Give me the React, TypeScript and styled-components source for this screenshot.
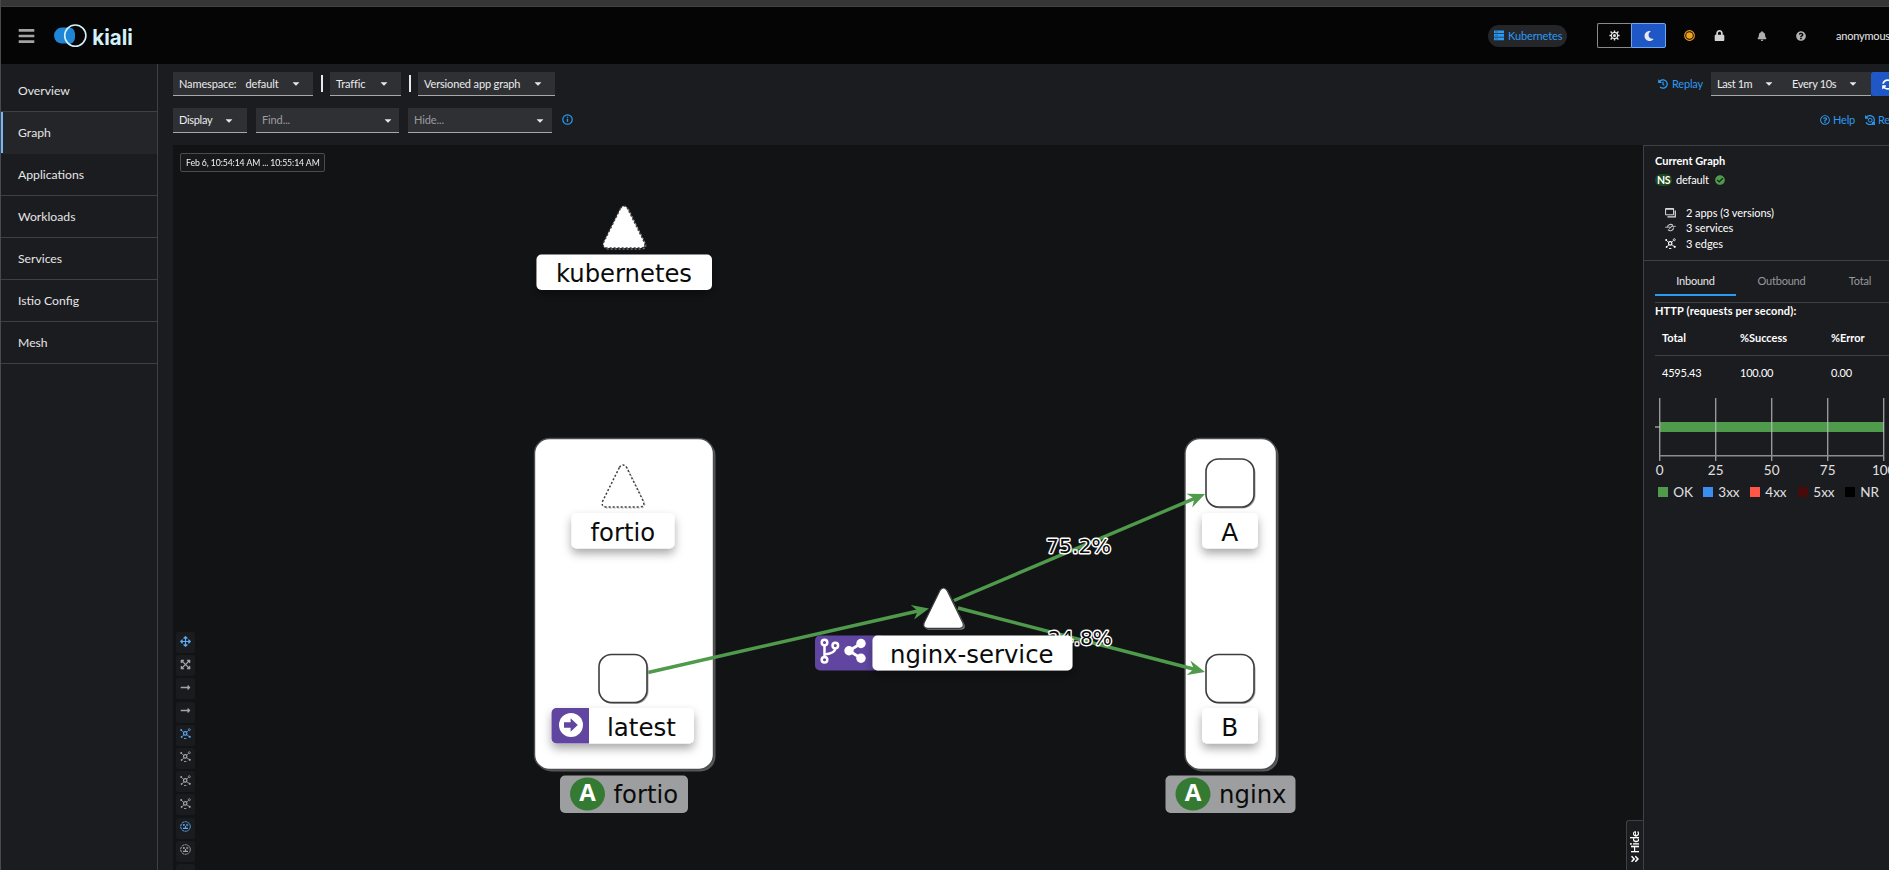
import React from 'react';
import styled, { createGlobalStyle, css } from 'styled-components';
import {
  FaArrowsAlt, FaBars, FaBell, FaCaretDown, FaCheckCircle, FaExpandArrowsAlt, FaHistory, FaLock,
  FaLongArrowAltRight, FaMoon, FaQuestionCircle, FaRegQuestionCircle, FaSyncAlt, FaAngleDoubleRight,
} from 'react-icons/fa';

const line = '#3f4044';
const blue = '#2b9af3';

const GlobalStyle = createGlobalStyle`
  * { box-sizing: border-box; }
  body {
    margin: 0; overflow: hidden; background: #1b1c20; color: #e6e6e6;
    font-family: Lato, "Open Sans", sans-serif; font-size: 11px; line-height: 16px;
    white-space: nowrap;
  }
`;

const Page = styled.div`
  display: flex; flex-direction: column;
  width: 1889px; height: 870px; overflow: hidden;
  background: #1b1c20; border-left: 1px solid #48494b;
`;
const WindowEdge = styled.div`
  flex: none; height: 7px; background: #363636; border-bottom: 1px solid #434343;
`;
const Masthead = styled.header`
  flex: none; display: flex; align-items: center; height: 57px; padding-left: 17px; background: #050505;
`;
const MenuIcon = styled(FaBars)`width: 17px; height: 18px; color: #a3a3a3; margin-right: 18px;`;
const Tools = styled.div`
  display: flex; align-items: center; margin-left: auto; width: 401px; flex: none; font-size: 11px;
`;
const ClusterPill = styled.div`
  display: flex; align-items: center; gap: 4px; width: 79px; height: 22px; padding-left: 6px;
  border-radius: 11px; background: #25262a; color: ${blue}; margin-right: 30px; letter-spacing: -0.12px;
  flex: none;
`;
const ThemeToggle = styled.div`display: flex; flex: none; height: 25px; margin-right: 18px;`;
const ThemeSide = styled.div<{ $on?: boolean }>`
  display: flex; align-items: center; justify-content: center; width: ${p => (p.$on ? 35 : 34)}px;
  border: 1px solid ${p => (p.$on ? '#6aa9ee' : '#8a8a8a')};
  border-right-width: ${p => (p.$on ? 1 : 0)}px;
  border-radius: ${p => (p.$on ? '0 2px 2px 0' : '2px 0 0 2px')};
  background: ${p => (p.$on ? '#1f57c6' : 'transparent')};
`;
const HeadIcon = styled.span<{ $w: number; $gap: number; $c: string }>`
  display: flex; flex: none; width: ${p => p.$w}px; margin-right: ${p => p.$gap}px; color: ${p => p.$c};
  svg { width: 100%; height: auto; }
`;
const User = styled.span`letter-spacing: -0.2px;`;

const Body = styled.div`display: flex; flex: 1; min-height: 0;`;
const Sidebar = styled.nav`flex: none; width: 157px; border-right: 1px solid ${line}; padding-top: 6px;`;
const NavItem = styled.a<{ $active?: boolean }>`
  display: flex; align-items: center; height: 42px; padding: 1px 0 0 17px;
  border-bottom: 1px solid ${line}; font-size: 12.2px;
  ${p => p.$active && css`
    background: #242529; box-shadow: inset 2px 0 #73b7f7; border-bottom-color: #242529;
  `}
`;
const Main = styled.main`flex: 1; min-width: 0; display: flex; flex-direction: column; padding-left: 15px;`;
const ToolRow = styled.div<{ $h: number; $pt: number }>`
  flex: none; display: flex; align-items: flex-start; height: ${p => p.$h}px; padding-top: ${p => p.$pt}px;
`;
const Select = styled.div<{ $w: number; $h?: number; $left?: number; $caret?: number; $muted?: boolean; $ls?: number }>`
  display: flex; align-items: center; flex: none; width: ${p => p.$w}px; height: ${p => p.$h ?? 24}px;
  padding: 0 ${p => p.$caret ?? 13}px 0 ${p => p.$left ?? 6}px; background: #2f3034; border-bottom: 1px solid #a8a8a8;
  color: ${p => (p.$muted ? '#9b9c9e' : '#ececec')}; letter-spacing: ${p => p.$ls ?? -0.12}px;
  svg { margin-left: auto; color: #e6e6e6; width: 8px; height: 11px; flex: none; }
`;
const Value = styled.span`margin-left: 9px;`;
const Bar = styled.i`width: 2px; height: 17px; margin: 3px 7px 0 8px; background: #e8e8e8; flex: none;`;
const Gap = styled.i<{ $w: number }>`width: ${p => p.$w}px; flex: none;`;
const InfoMark = styled.span`display: flex; color: ${blue}; margin: 6px 0 0 10px;`;
const RightTools = styled.div<{ $w: number }>`
  display: flex; align-items: flex-start; flex: none; margin-left: auto; width: ${p => p.$w}px;
`;
const LinkAction = styled.a<{ $w: number; $h: number; $gap: number }>`
  display: flex; align-items: center; gap: ${p => p.$gap}px; width: ${p => p.$w}px; height: ${p => p.$h}px;
  flex: none; color: ${blue}; letter-spacing: -0.2px;
  svg { width: 10px; height: 10px; flex: none; }
`;
const Refresh = styled.button`
  display: flex; align-items: center; flex: none; width: 34px; height: 24px; padding: 0 0 0 11px;
  border: 0; border-radius: 2px; background: #1f57c6; color: #fff;
`;

const Content = styled.div`display: flex; flex: 1; min-height: 0;`;
const Canvas = styled.section`position: relative; flex: none; width: 1470px; background: #121315;`;
const TimeRange = styled.div`
  position: absolute; left: 7px; top: 8px; width: 145px; height: 19px; padding-left: 5px;
  border: 1px solid #4a4b4f; border-radius: 2px; background: #17181a; color: #f2f2f2;
  font-size: 10px; line-height: 16px;
`;
const TimeText = styled.span`
  display: inline-block; transform: scaleX(0.87); transform-origin: 0 50%; letter-spacing: -0.12px;
`;
const GraphLayer = styled.svg`position: absolute; left: 0; top: 0; font-family: "DejaVu Sans", sans-serif;`;
const ToolStack = styled.div`
  position: absolute; left: 3px; top: 487px; display: flex; flex-direction: column; gap: 2.2px;
`;
const StackButton = styled.div<{ $on?: boolean }>`
  display: flex; align-items: center; justify-content: center; width: 19px; height: 21px; padding-bottom: 3px;
  border-radius: 2px; background: #1a1b1e; color: ${p => (p.$on ? '#5fa8ee' : '#a3a4a6')};
`;
const HideTab = styled.div`
  position: absolute; right: 0; bottom: 0; width: 17px; height: 50px; display: flex; flex-direction: column;
  align-items: center; gap: 1px; padding-top: 10px;
  border: 1px solid ${line}; border-width: 1px 0 0 1px; border-radius: 3px 0 0 0; background: #1b1c20; color: #fff;
  font-weight: 700;
`;
const HideText = styled.span`
  writing-mode: vertical-rl; transform: rotate(180deg); letter-spacing: -0.25px; line-height: 14px;
`;

const Panel = styled.aside`
  flex: 1; min-width: 0; border-left: 1px solid ${line}; border-top: 1px solid ${line}; color: #fff;
`;
const Summary = styled.div`height: 115px; padding: 7px 0 0 11px; border-bottom: 1px solid ${line};`;
const Strong = styled.div`font-weight: 700;`;
const NsRow = styled.div`display: flex; align-items: center; height: 16px; margin-top: 3px; letter-spacing: -0.15px;`;
const NsBadge = styled.span`
  width: 17px; height: 12px; margin-right: 4px; border-radius: 6px; background: #1c4a1f; color: #fff;
  font-size: 10.5px; line-height: 12px; font-weight: 700; text-align: center; letter-spacing: -0.3px;
`;
const Check = styled(FaCheckCircle)`width: 10px; height: 10px; margin-left: 6px; color: #4f9a4b;`;
const Facts = styled.div`display: grid; grid-auto-rows: 15.5px; margin: 17px 0 0 10px;`;
const Fact = styled.div`display: flex; align-items: center; gap: 10px; letter-spacing: -0.06px;`;
const Details = styled.div<{ $h: number }>`padding-left: 11px; height: ${p => p.$h}px;`;
const Tabs = styled.div`display: flex; height: 42px; padding-top: 3px; border-bottom: 1px solid ${line};`;
const Tab = styled.div<{ $on?: boolean; $w: number }>`
  display: flex; align-items: center; justify-content: center; flex: none; width: ${p => p.$w}px; height: 32px;
  padding-top: 4px;
  border-bottom: 2px solid ${p => (p.$on ? blue : 'transparent')}; color: ${p => (p.$on ? '#e8e8e8' : '#97989a')};
  letter-spacing: -0.2px;
`;
const Heading = styled.div`font-weight: 700; letter-spacing: 0.14px;`;
const Row = styled.div<{ $head?: boolean; $h: number; $ls: number }>`
  display: grid; grid-template-columns: 78px 91px 1fr; align-items: center; padding-left: 7px;
  height: ${p => p.$h}px; font-weight: ${p => (p.$head ? 700 : 400)}; letter-spacing: ${p => p.$ls}px;
  border-bottom: ${p => (p.$head ? `1px solid ${line}` : 'none')}; padding-top: ${p => (p.$head ? 2 : 0)}px;
`;
const Chart = styled.svg`display: block; font-family: Lato, sans-serif;`;

const Ring = () => (
  <svg width="11" height="11" viewBox="0 0 11 11">
    <circle cx="5.5" cy="5.5" r="4.7" fill="none" stroke="currentColor" strokeWidth="1.2" />
    <path d="M5.5 4.8v3M5.5 2.8v1" stroke="currentColor" strokeWidth="1.4" />
  </svg>
);
const Topology = () => (
  <svg width="11" height="11" viewBox="0 0 11 11" fill="none" stroke="currentColor">
    <circle cx="5.2" cy="5.4" r="1.7" strokeWidth="1.2" />
    <path d="M1.2 2.2 3.6 4.4M6.6 4.2 8.4 2.6M4 6.8 2 8.6M6.7 6.7l2.6 1.8" strokeWidth=".8" />
    <g fill="currentColor" stroke="none">
      <circle cx="1.2" cy="2" r="1" /><circle cx="9.7" cy="8.8" r="1.1" /><circle cx="1.6" cy="9" r=".9" />
      <path d="M4 10h2.4v.9H4z" />
    </g>
    <circle cx="9.3" cy="1.7" r="1" strokeWidth=".8" />
  </svg>
);
const Boxed = () => (
  <svg width="11" height="11" viewBox="0 0 11 11" fill="none" stroke="currentColor">
    <circle cx="5.5" cy="5.5" r="4.8" strokeWidth="1" strokeDasharray="2.4 .6" />
    <circle cx="3.9" cy="4.1" r="1" fill="currentColor" stroke="none" /><circle cx="7.2" cy="4" r=".8" strokeWidth=".8" />
    <path d="M3 7.4h5M5.5 5v2" strokeWidth="1.1" />
  </svg>
);
const Cluster = () => (
  <svg width="10" height="11" viewBox="0 0 10 11" fill="currentColor">
    <path d="M0 .6h10v2.7H0zM0 4.1h10v2.7H0zM0 7.6h10v2.7H0z" />
    <path d="M1 1.9h3M1 5.4h3M1 8.9h3" stroke="#1d4c78" strokeWidth=".6" />
  </svg>
);
const Sun = () => (
  <svg width="11" height="11" viewBox="0 0 11 11" fill="none" stroke="#e4e4e4">
    <circle cx="5.5" cy="5.5" r="3.1" strokeWidth="1.2" /><circle cx="5.5" cy="5.5" r="1.5" fill="#e4e4e4" stroke="none" />
    <path d="M5.5 .4v2M5.5 8.6v2M.4 5.5h2M8.6 5.5h2M1.6 1.6 3.2 3.2M7.8 7.8l1.6 1.6M9.4 1.6 7.8 3.2M3.2 7.8 1.6 9.4" strokeWidth="1.4" />
  </svg>
);
const Status = () => (
  <svg viewBox="0 0 10 10">
    <circle cx="5" cy="5" r="4.4" fill="none" stroke="#f0a020" strokeWidth="1" />
    <circle cx="5" cy="5" r="3" fill="#f0a020" />
  </svg>
);
const Apps = () => (
  <svg width="11" height="10" viewBox="0 0 11 10" fill="none" stroke="#e0e0e0">
    <path d="M.6 .6h8v6.2h-8z" /><path d="M.6 1h8" strokeWidth="1.4" /><path d="M10.3 2.6v6.3H2.4" strokeWidth="1.2" />
  </svg>
);
const Services = () => (
  <svg width="11" height="10" viewBox="0 0 11 10" fill="none" stroke="#c8c8c8">
    <path d="M2.4 4A3.2 3.2 0 0 1 8 2.6M8.6 4.6A3.2 3.2 0 0 1 3 6.6" strokeWidth="1.1" />
    <path d="M.2 4.2h5.4l1.6-1.6M10.8 3.4H7L3.8 6.2" strokeWidth=".9" />
  </svg>
);
const Reset = () => (
  <svg viewBox="0 0 10 10" fill="none" stroke="currentColor">
    <path d="M1.2 2.4A4.5 4.5 0 1 1 1 7.4M.6 .5v2.6h2.6" strokeWidth="1.2" />
    <circle cx="5.2" cy="5.2" r="1.9" strokeWidth="1" /><path d="M6.5 6.5 10 9.6M9.6 6.8v2.8H7" strokeWidth="1" />
  </svg>
);

const Logo = () => (
  <svg width="82" height="30" viewBox="53 21 82 30">
    <rect x="54" y="27.6" width="21" height="16" rx="8" fill="#1f86d6" />
    <path d="M68 28v15.4q4.5 1 6-2.4 2-5 0-10.8-1.7-3.2-6-2.2z" fill="#1f86d6" />
    <circle cx="75.3" cy="35.6" r="10.6" fill="none" stroke="#d3f1fb" strokeWidth="1.6" />
    <text x="92.3" y="45" fontFamily="Inter, sans-serif" fontWeight="700" fontSize="21.5" textLength="40.5" lengthAdjust="spacingAndGlyphs" fill="#d3f1fb">kiali</text>
  </svg>
);

const TRI = 'M-3.6 2.4Q0-2.5 3.6 2.4L20.5 36.5Q22 41.5 17 42H-17Q-22 41.5-20.5 36.5Z';
const Triangle = ({ x, y, dotted }: { x: number; y: number; dotted?: boolean }) => (
  <g transform={`translate(${x} ${y})`}>
    {!dotted && <path d={TRI} transform="translate(1.5 1.5) scale(.95 .96)" fill="#77787a" />}
    {dotted && <path d={TRI} transform="translate(1 1)" fill="none" stroke="#aaa" strokeWidth="1" strokeDasharray="2 2" />}
    <path d={TRI} transform={dotted ? undefined : 'scale(.95 .96)'} fill="#fff" stroke="#3c3d40" strokeWidth={dotted ? 1.5 : 1.2} strokeDasharray={dotted ? '2 2' : undefined} />
  </g>
);
const Square = ({ x, y }: { x: number; y: number }) => (
  <g>
    <rect x={x + 1.5} y={y + 1.5} width="48" height="48" rx="13" fill="#a8a8a8" />
    <rect x={x} y={y} width="48" height="48" rx="12.5" fill="#fff" stroke="#3c3d40" strokeWidth="1.6" />
  </g>
);
const Group = ({ x, w }: { x: number; w: number }) => (
  <g>
    <rect x={x + 2} y="440.5" width={w} height="331" rx="15" fill="#58595b" />
    <rect x={x} y="438.5" width={w} height="331" rx="15" fill="#fff" stroke="#4b4c4e" strokeWidth="1.4" />
  </g>
);
type NameProps = { x: number; y: number; w: number; tx: number; tw: number; h?: number; children: string };
const Name = ({ x, y, w, tx, tw, h = 35.5, children }: NameProps) => (
  <g>
    <rect x={x} y={y} width={w} height={h} rx="5" fill="#fff" filter="url(#lift)" />
    <text x={tx} y={y + 27.6} fontSize="24" textLength={tw} lengthAdjust="spacingAndGlyphs" fill="#0b0b0b">{children}</text>
  </g>
);
const GroupName = ({ x, w, tx, tw, children }: { x: number; w: number; tx: number; tw: number; children: string }) => (
  <g>
    <rect x={x} y="775.5" width={w} height="37.5" rx="5" fill="#9d9ea0" />
    <ellipse cx={x + 27.5} cy="794" rx="17.5" ry="16.5" fill="#347a32" />
    <text x={x + 27.5} y="800.6" textAnchor="middle" fontFamily="Open Sans, sans-serif" fontSize="24" fontWeight="700" fill="#fff">A</text>
    <text x={tx} y="802.6" fontSize="24" textLength={tw} lengthAdjust="spacingAndGlyphs" fill="#0b0b0b">{children}</text>
  </g>
);
const Edge = ({ x1, y1, x2, y2 }: { x1: number; y1: number; x2: number; y2: number }) => {
  const angle = (Math.atan2(y2 - y1, x2 - x1) * 180) / Math.PI;
  const length = Math.hypot(x2 - x1, y2 - y1);
  return (
    <g transform={`translate(${x1} ${y1}) rotate(${angle})`} fill="#4f9a4b">
      <path d={`M0 0H${length - 8}`} stroke="#4f9a4b" strokeWidth="3.4" />
      <path d={`M${length} 0L${length - 17} -7.4L${length - 11.5} 0L${length - 17} 7.4Z`} />
    </g>
  );
};
const Percent = ({ x, y, w, children }: { x: number; y: number; w: number; children: string }) => (
  <text x={x} y={y} fontSize="20" textLength={w} lengthAdjust="spacingAndGlyphs" fill="#0b0b0b" stroke="#fff" strokeWidth="2.8" strokeLinejoin="round" paintOrder="stroke">{children}</text>
);

const Graph = () => (
  <GraphLayer width="1470" height="725" viewBox="173 145 1470 725">
    <defs>
      <filter id="lift" x="-20%" y="-40%" width="140%" height="220%">
        <feDropShadow dx="0" dy="5" stdDeviation="5" floodColor="#000" floodOpacity=".34" />
      </filter>
    </defs>
    <Group x={534.5} w={179} />
    <Group x={1185} w={91.5} />
    <Edge x1={648} y1={672.5} x2={929} y2={608.5} />
    <Edge x1={954} y1={600.5} x2={1205} y2={494} />
    <Edge x1={958} y1={608} x2={1205} y2={672} />
    <Percent x={1046} y={553.3} w={65}>75.2%</Percent>
    <Percent x={1048} y={645.3} w={64}>24.8%</Percent>
    <Triangle x={624} y={206} dotted />
    <Name x={536.5} y={254.5} w={175.5} tx={556} tw={136}>kubernetes</Name>
    <Triangle x={623} y={465} dotted />
    <Name x={571.5} y={513} w={103} tx={590.5} tw={64.5}>fortio</Name>
    <Square x={599} y={654.5} />
    <Name x={551.5} y={708} w={142.5} tx={607} tw={69}>latest</Name>
    <path d="M556.5 708H589v35.5H556.5a5 5 0 0 1-5-5V713a5 5 0 0 1 5-5z" fill="#6046a0" />
    <circle cx="571" cy="725" r="12" fill="#fff" />
    <path d="M564 722.3h6.6v-4l7.2 6.7-7.2 6.7v-4H564z" fill="#6046a0" />
    <Square x={1206} y={459} />
    <Name x={1202} y={513} w={56} tx={1221.3} tw={17}>A</Name>
    <Square x={1206} y={654.5} />
    <Name x={1202} y={708} w={56} tx={1221.3} tw={17}>B</Name>
    <Triangle x={943.5} y={588} />
    <rect x="815" y="635.5" width="70" height="35" rx="5" fill="#6046a0" />
    <Name x={872.5} y={635.5} w={200} h={35} tx={890} tw={163.5}>nginx-service</Name>
    <g fill="none" stroke="#fff" strokeWidth="2.5">
      <circle cx="824.5" cy="642.5" r="2.8" /><circle cx="824.5" cy="659.8" r="2.8" /><circle cx="835.3" cy="645.6" r="2.8" />
      <path d="M824.5 645.5v11.5M835.3 648.5q0 4.5-10.8 6" />
    </g>
    <g fill="#fff">
      <circle cx="849" cy="650.8" r="4.7" /><circle cx="861" cy="643.5" r="4.7" /><circle cx="861" cy="658.2" r="4.7" />
      <path d="M861 643.5 849 650.8 861 658.2" fill="none" stroke="#fff" strokeWidth="2.8" />
    </g>
    <GroupName x={560} w={128} tx={613.5} tw={64.5}>fortio</GroupName>
    <GroupName x={1165.5} w={130} tx={1219} tw={67.5}>nginx</GroupName>
  </GraphLayer>
);

const legend: [number, string, string][] = [
  [3, '#4f9a4b', 'OK'], [48, '#3a8fee', '3xx'], [95, '#ff5647', '4xx'], [143, '#470b0b', '5xx'], [190, '#000', 'NR'],
];
const HttpChart = () => (
  <Chart width="234" height="110" viewBox="0 0 234 110">
    <path d="M-1 30H5" stroke="#77787a" strokeWidth="2" />
    <rect x="5" y="25" width="224" height="10" fill="#4f9a4b" />
    {[0, 25, 50, 75, 100].map((v, i) => (
      <g key={v}>
        <path d={`M${4.7 + i * 56} 1V64`} stroke="#c2c2c2" strokeOpacity=".8" strokeWidth="1.3" />
        <text x={4.7 + i * 56} y="78" fontSize="13.5" fill="#e0e0e0" textAnchor="middle">{v}</text>
      </g>
    ))}
    <path d="M4.5 58.7H229" stroke="#8b8c8e" strokeWidth="1.5" />
    {legend.map(([x, c, t]) => (
      <g key={t}>
        <rect x={x} y="90" width="10" height="10" fill={c} />
        <text x={x + 15.3} y="100" fontSize="13.5" fill="#e0e0e0">{t}</text>
      </g>
    ))}
  </Chart>
);

const nav = ['Overview', 'Graph', 'Applications', 'Workloads', 'Services', 'Istio Config', 'Mesh'];
const stack: [React.ReactNode, boolean][] = [
  [<FaArrowsAlt size={11} />, true], [<FaExpandArrowsAlt size={11} />, false],
  [<FaLongArrowAltRight size={11} />, false], [<FaLongArrowAltRight size={11} />, false],
  [<Topology />, true], [<Topology />, false], [<Topology />, false], [<Topology />, false],
  [<Boxed />, true], [<Boxed />, false], [null, false],
];

export default function App() {
  return (
    <Page>
      <GlobalStyle />
      <WindowEdge />
      <Masthead>
        <MenuIcon />
        <Logo />
        <Tools>
          <ClusterPill><Cluster />Kubernetes</ClusterPill>
          <ThemeToggle>
            <ThemeSide><Sun /></ThemeSide>
            <ThemeSide $on><FaMoon size={10} color="#e8e8e8" /></ThemeSide>
          </ThemeToggle>
          <HeadIcon $w={11} $gap={19} $c="#f0a020"><Status /></HeadIcon>
          <HeadIcon $w={11} $gap={32} $c="#d2d2d2"><FaLock /></HeadIcon>
          <HeadIcon $w={10} $gap={29} $c="#b0b0b0"><FaBell /></HeadIcon>
          <HeadIcon $w={10} $gap={30} $c="#b0b0b0"><FaQuestionCircle /></HeadIcon>
          <User>anonymous</User>
        </Tools>
      </Masthead>
      <Body>
        <Sidebar>
          {nav.map(n => <NavItem key={n} $active={n === 'Graph'}>{n}</NavItem>)}
        </Sidebar>
        <Main>
          <ToolRow $h={44} $pt={8}>
            <Select $w={140}>Namespace:<Value>default</Value><FaCaretDown /></Select>
            <Bar />
            <Select $w={71}>Traffic<FaCaretDown /></Select>
            <Bar />
            <Select $w={137} $ls={-0.14}>Versioned app graph<FaCaretDown /></Select>
            <RightTools $w={231}>
              <LinkAction $w={53} $h={23} $gap={4}><FaHistory />Replay</LinkAction>
              <Select $w={80} $caret={18} $ls={-0.4}>Last 1m<FaCaretDown /></Select>
              <Select $w={80} $left={1} $caret={14} $ls={-0.32}>Every 10s<FaCaretDown /></Select>
              <Refresh><FaSyncAlt size={11} /></Refresh>
            </RightTools>
          </ToolRow>
          <ToolRow $h={37} $pt={0}>
            <Select $w={74} $h={25} $caret={14} $ls={-0.3}>Display<FaCaretDown /></Select>
            <Gap $w={9} />
            <Select $w={143} $h={25} $caret={7} $muted>Find...<FaCaretDown /></Select>
            <Gap $w={9} />
            <Select $w={144} $h={25} $caret={8} $muted>Hide...<FaCaretDown /></Select>
            <InfoMark><Ring /></InfoMark>
            <RightTools $w={69}>
              <LinkAction $w={45} $h={24} $gap={3}><FaRegQuestionCircle />Help</LinkAction>
              <LinkAction $w={40} $h={24} $gap={3}><Reset />Reset</LinkAction>
            </RightTools>
          </ToolRow>
          <Content>
            <Canvas>
              <Graph />
              <TimeRange><TimeText>Feb 6, 10:54:14 AM ... 10:55:14 AM</TimeText></TimeRange>
              <ToolStack>
                {stack.map(([icon, on], i) => <StackButton key={i} $on={on}>{icon}</StackButton>)}
              </ToolStack>
              <HideTab><HideText>Hide</HideText><FaAngleDoubleRight size={10} /></HideTab>
            </Canvas>
            <Panel>
              <Summary>
                <Strong>Current Graph</Strong>
                <NsRow><NsBadge>NS</NsBadge>default<Check /></NsRow>
                <Facts>
                  <Fact><Apps />2 apps (3 versions)</Fact>
                  <Fact><Services />3 services</Fact>
                  <Fact><Topology />3 edges</Fact>
                </Facts>
              </Summary>
              <Details $h={136}>
                <Tabs>
                  <Tab $on $w={81}>Inbound</Tab>
                  <Tab $w={91}>Outbound</Tab>
                  <Tab $w={66}>Total</Tab>
                </Tabs>
                <Heading>HTTP (requests per second):</Heading>
                <Row $head $h={37} $ls={0}><span>Total</span><span>%Success</span><span>%Error</span></Row>
                <Row $h={33} $ls={-0.2}><span>4595.43</span><span>100.00</span><span>0.00</span></Row>
              </Details>
              <Details $h={110}><HttpChart /></Details>
            </Panel>
          </Content>
        </Main>
      </Body>
    </Page>
  );
}
